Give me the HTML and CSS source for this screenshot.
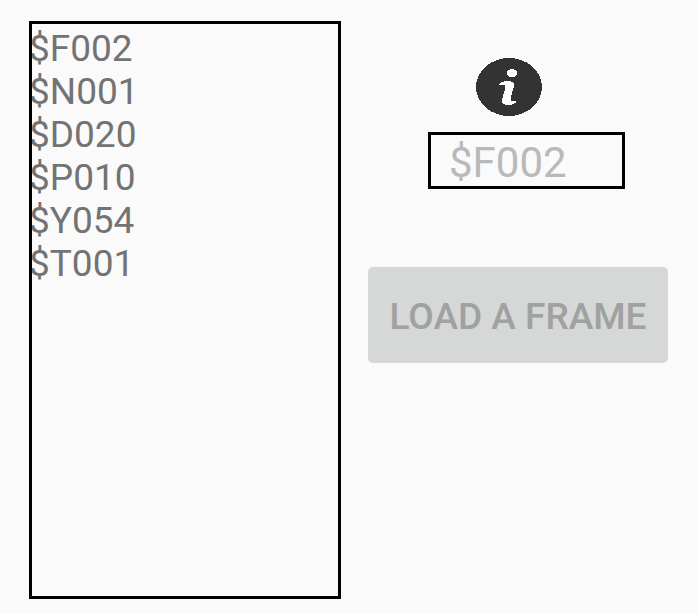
FILE: index.html
```html
<!DOCTYPE html>
<html lang="en">
<head>
<meta charset="utf-8">
<title>Frame loader</title>
<link rel="stylesheet" href="styles.css">
</head>
<body>
<main class="screen">
  <section class="frames">
    <div>$F002</div>
    <div>$N001</div>
    <div>$D020</div>
    <div>$P010</div>
    <div>$Y054</div>
    <div>$T001</div>
  </section>
  <section class="controls">
    <svg class="info" viewBox="0 0 66 58" shape-rendering="crispEdges" aria-hidden="true">
      <ellipse cx="33" cy="29" rx="33" ry="29" fill="#333"/>
      <ellipse cx="36" cy="15.2" rx="5.1" ry="4.3" fill="#fff"/>
      <path fill="#fff" d="M23 27C24 24 28 23 32 23C37 23 38.5 25 38 28L35 39C34.3 42 34.5 43.5 36 43.5L38 42.7H40.3C40 46 36 47 32 47C27 47 25.5 45 26 42L29 31C29.5 28 29 26.5 27 26.5L25 27.5Z"/>
    </svg>
    <div class="field">$F002</div>
    <button class="load" disabled>LOAD A FRAME</button>
  </section>
</main>
</body>
</html>
```

FILE: styles.css
```css
* { box-sizing: border-box; }
body {
  margin: 0;
  background: #fafafa;
  font-family: Roboto, sans-serif;
}
.screen {
  display: flex;
  gap: 27px;
  height: 614px;
  padding: 21px 30px 15px 29px;
}
.frames {
  width: 312px;
  height: 578px;
  padding-top: 3px;
  overflow: hidden;
  border: 3px solid #000;
  color: #737373;
  font-size: 37px;
  line-height: 43px;
}
.frames div { margin-left: -3px; }
.controls {
  display: flex;
  flex-direction: column;
  align-items: center;
  width: 300px;
  padding-top: 37px;
}
.info {
  width: 66px;
  height: 58px;
  margin-right: 18px;
}
.field {
  width: 197px;
  height: 57px;
  margin: 16px 0 0 17px;
  padding-left: 18px;
  border: 3px solid #000;
  color: #b9b9b9;
  font-size: 42px;
  line-height: 56px;
}
.load {
  width: 300px;
  height: 96px;
  margin-top: 78px;
  padding: 3px 0 0;
  border: 0;
  border-radius: 5px;
  background: #d6d7d7;
  color: #a0a1a1;
  font: 500 37px/1 Roboto, sans-serif;
}
```
